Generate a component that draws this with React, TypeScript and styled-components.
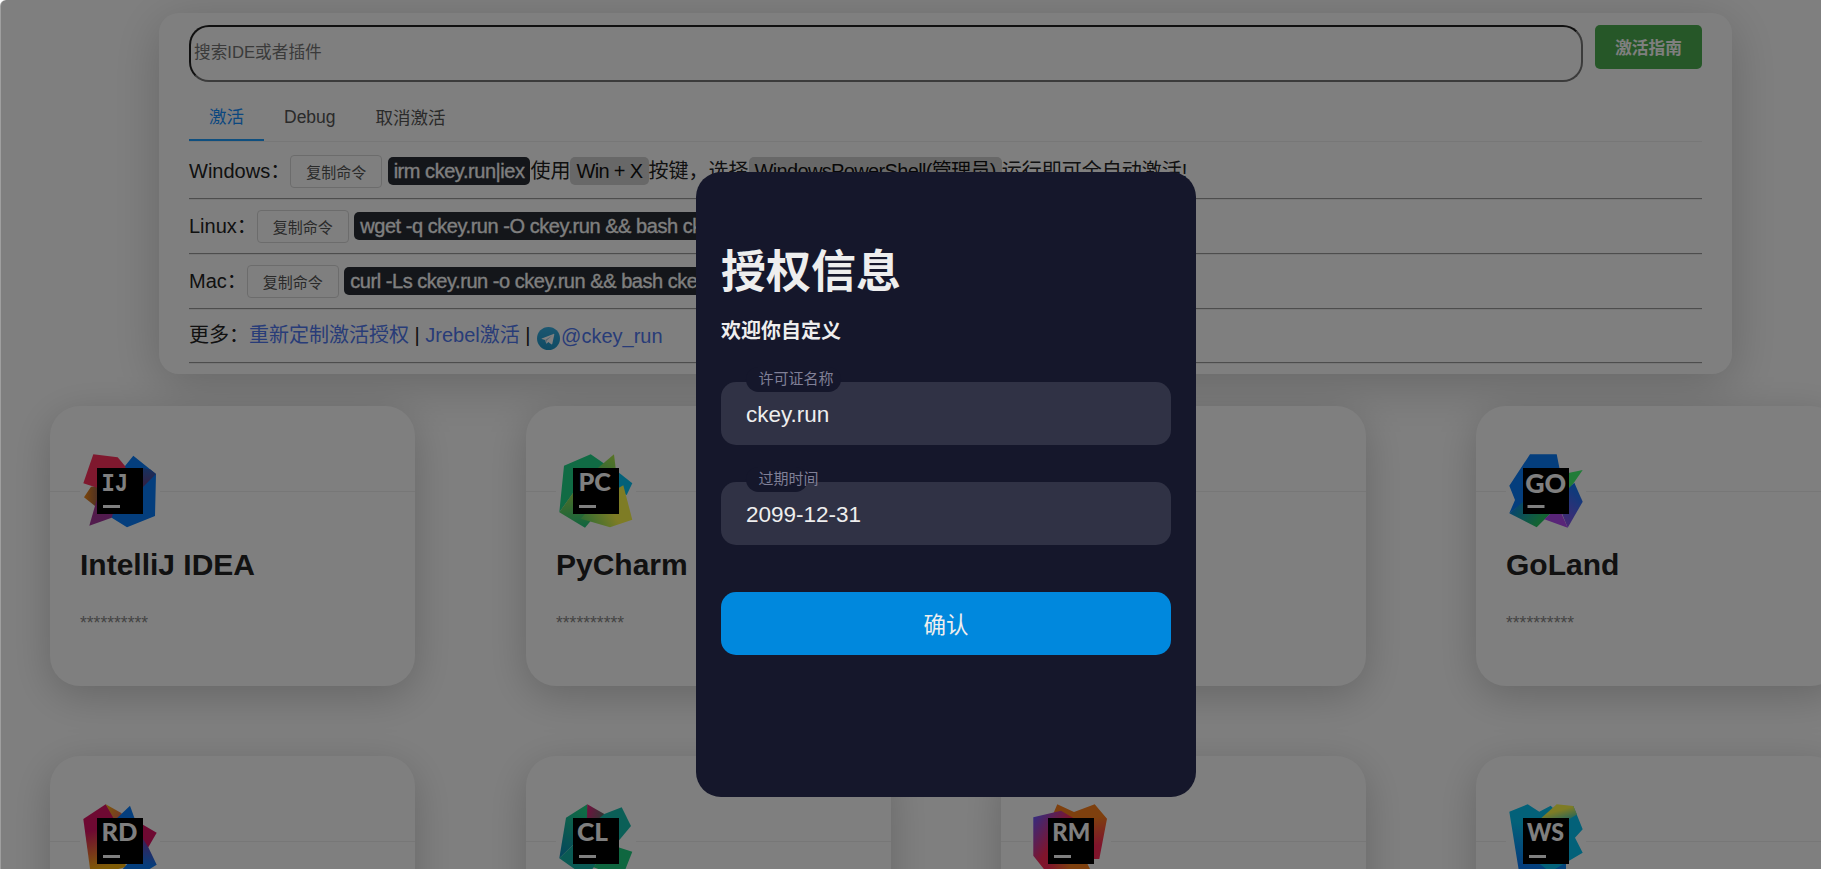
import React from 'react';
import styled, { createGlobalStyle } from 'styled-components';

const GlobalStyle = createGlobalStyle`
  * { box-sizing: border-box; }
  html, body { margin: 0; background: #fff; overflow: hidden; }
  body, input, button {
    font-family: "Liberation Sans", "Noto Sans CJK SC", sans-serif;
  }
`;

const Page = styled.div`
  position: relative;
  width: 1821px;
  height: 869px;
  overflow: hidden;
  padding: 13px 0 0;
  background: #fff;
  color: #222;
`;

const HeaderPanel = styled.header`
  width: 1573px;
  height: 361px;
  margin: 0 0 32px 159px;
  padding: 12px 30px 0;
  border-radius: 20px;
  background: #fff;
  box-shadow: 0 10px 50px rgba(0, 0, 0, 0.2);
`;

const SearchBar = styled.div`
  display: flex;
  align-items: flex-start;
  gap: 12px;
`;

const SearchInput = styled.input`
  flex: 1;
  height: 57px;
  padding: 0 2px 1px 3px;
  border: 2px inset #767676;
  border-radius: 20px;
  background: #fff;
  font-size: 16.67px;
  outline: none;
  &::placeholder { color: #757575; }
`;

const GuideButton = styled.button`
  width: 107px;
  height: 44px;
  padding: 0;
  border: 0;
  border-radius: 5px;
  background: #4caf50;
  color: #fff;
  font-size: 16.67px;
  font-weight: 700;
`;

const Tabs = styled.nav`
  display: flex;
  height: 60px;
  padding-top: 11px;
  border-bottom: 1px solid #eee;
`;

const Tab = styled.a<{ $active?: boolean; $line?: number }>`
  height: 48px;
  padding: 0 20px;
  line-height: ${(p) => p.$line ?? 49}px;
  font-size: 17.5px;
  color: ${(p) => (p.$active ? '#1890ff' : '#555')};
  border-bottom: 2px solid ${(p) => (p.$active ? '#1e9fff' : 'transparent')};
`;

const CommandRow = styled.div<{ $height: number; $top: number }>`
  display: flex;
  align-items: flex-start;
  height: ${(p) => p.$height}px;
  padding-top: ${(p) => p.$top}px;
  font-size: 20px;
  line-height: 28px;
  white-space: pre;
`;

const Rule = styled.hr`
  margin: 0;
  border: 0;
  border-top: 1px solid #9a9a9a;
  border-bottom: 1px solid #eee;
`;

const CopyButton = styled.button`
  width: 92px;
  height: 33px;
  margin: -2px 5.5px 0 0;
  padding: 0;
  border: 1px solid #d9d9d9;
  border-radius: 4px;
  background: #fff;
  color: #555;
  font-size: 15px;
`;

const Key = styled.code`
  height: 28px;
  padding: 0 6px;
  border-radius: 5px;
  font-family: inherit;
  letter-spacing: -0.65px;
  background: #d0d0d0;
  color: #111;
`;

const Code = styled(Key)`
  letter-spacing: -0.46px;
  background: #282c34;
  color: #fff;
  -webkit-text-stroke: 0.3px #fff;
`;

const Link = styled.a`
  color: #5078f0;
`;

const TelegramLink = styled(Link)`
  display: flex;
  padding: 1px 0 0 1px;
  svg { margin: 5px 1px 0 0; }
`;

const CardGrid = styled.main`
  display: grid;
  grid-template-columns: 366px 365px 365px 365px;
  grid-auto-rows: 280px;
  column-gap: 110px;
  row-gap: 70px;
  width: 1841px;
  padding-left: 50px;
`;

const Card = styled.article`
  width: 365px;
  padding: 45px 30px 0;
  border-radius: 30px;
  background: linear-gradient(#eee, #eee) 0 85px / 100% 1px no-repeat #fff;
  box-shadow: 0 10px 40px rgba(0, 0, 0, 0.2);
`;

const IconBox = styled.div`
  width: 80px;
  height: 80px;
  background: #fff;
  svg { display: block; }
`;

const CardTitle = styled.h2`
  margin: 17px 0 0;
  font-size: 30px;
  line-height: 34px;
  font-weight: 700;
`;

const CardKey = styled.p`
  margin: 31px 0 0;
  font-size: 17.5px;
  line-height: 20px;
  color: #888;
`;

const Overlay = styled.div`
  position: absolute;
  inset: 0;
  background: rgba(0, 0, 0, 0.5);
  border-left: 1px solid rgba(255, 255, 255, 0.25);
  border-top-left-radius: 6px;
`;

const Dialog = styled.form`
  position: absolute;
  left: 696px;
  top: 172px;
  width: 500px;
  height: 625px;
  padding: 65px 25px 0;
  border-radius: 25px;
  background: #15172b;
  color: #eee;
`;

const DialogTitle = styled.h1`
  margin: 0;
  height: 72px;
  font-size: 45px;
  line-height: 72px;
`;

const DialogSubtitle = styled.p`
  margin: 6px 0 0;
  height: 32px;
  font-size: 20px;
  line-height: 32px;
  font-weight: 700;
`;

const Field = styled.label<{ $gap: number }>`
  position: relative;
  display: block;
  height: 63px;
  margin-top: ${(p) => p.$gap}px;
`;

const FieldInput = styled.input`
  width: 100%;
  height: 100%;
  padding: 3px 25px 0;
  border: 0;
  border-radius: 15px;
  outline: 0;
  background: #303245;
  color: #eee;
  font-size: 22.5px;
`;

const Cut = styled.span<{ $width: number }>`
  position: absolute;
  left: 25px;
  top: -15px;
  width: ${(p) => p.$width}px;
  height: 25px;
  border-radius: 12.5px;
  background: #15172b;
`;

const FieldLabel = styled.span`
  position: absolute;
  left: 37.5px;
  top: -13px;
  font-size: 15px;
  line-height: 20px;
  white-space: nowrap;
  color: #808097;
`;

const Submit = styled.button`
  display: block;
  width: 100%;
  height: 63px;
  margin-top: 47px;
  padding: 0 0 2px;
  border: 0;
  border-radius: 15px;
  background: #08d;
  color: #eee;
  font-size: 22.5px;
`;

type Shape = { points: string; fill: string; to?: string; dir?: [number, number, number, number] };
type Product = {
  code: string;
  name: string;
  x: number;
  w: number;
  size?: number;
  font?: string;
  baseline?: number;
  barX?: number;
  shapes: Shape[];
};

const products: Product[] = [
  {
    code: 'IJ', name: 'IntelliJ IDEA', x: 21.5, w: 26.5, size: 26.5, font: 'Liberation Mono',
    shapes: [
      { points: '11,35.7 4,46.3 15,55 20,50 20,35', fill: '#f98a12', to: '#8a5a50', dir: [0, 0, 1, 0] },
      { points: '16.7,49 9.3,74.7 31.7,66.7 40,60', fill: '#a8328c', to: '#a03aa8', dir: [0, 0, 1, 1] },
      { points: '45,15 53.3,4.7 76,23 75,65 47,76.3 31.7,66.7 40,40', fill: '#087cfa' },
      { points: '76,23 63,36 63,17 70,18.3', fill: '#2b62c0', to: '#6b3f80', dir: [0, 0, 0, 1] },
      { points: '13.3,3.3 37.7,6.3 45,15 48,25 17,36.7 3.3,32.3', fill: '#fe315d' },
    ],
  },
  {
    code: 'PC', name: 'PyCharm', x: 22.5, w: 32.5,
    shapes: [
      { points: '34.7,3.3 47.7,12.3 60,30 17,42.3 3.3,61.3 8,14.7', fill: '#21d789' },
      { points: '3.3,61.3 17,42 40,60 34,70.7 29,76.7', fill: '#9bdc50', to: '#21c97f', dir: [0.4, 0, 0.5, 1] },
      { points: '58,3.3 60,20 36,22', fill: '#b8ea48', to: '#58d070', dir: [1, 0, 0, 1] },
      { points: '63,21.7 76.3,32.3 70.7,44 60,40', fill: '#07c3f2' },
      { points: '67.3,34.3 76.3,68.7 54,76.3 24.7,67.7 40,50', fill: '#48d46a', to: '#fcf84a', dir: [0, 1, 0.65, 0.7] },
    ],
  },
  {
    code: 'PS', name: 'PhpStorm', x: 22.5, w: 30,
    shapes: [
      { points: '8,12 38,3.3 72,16 76,52 50,76 12,68 3.3,40', fill: '#b74af7', to: '#6b57ff', dir: [0, 0, 1, 1] },
    ],
  },
  {
    code: 'GO', name: 'GoLand', x: 19.2, w: 41, size: 27, baseline: 41.7, barX: 21.5,
    shapes: [
      { points: '24,3.3 50.7,3.3 56,30 20,50 3.3,62.3 9,49 3.3,34.7', fill: '#087cfa' },
      { points: '3.3,62.3 17.3,50.7 44,63 30.7,76.3', fill: '#087cfa', to: '#27c765', dir: [0, 0, 0.9, 0.4] },
      { points: '60,22.5 76.7,19 60,43', fill: '#42f870' },
      { points: '68.3,31.7 76.7,50.7 61.7,76.7 55,60 60,40', fill: '#087cfa', to: '#9052e8', dir: [0.7, 0, 0.3, 1] },
      { points: '44,63 38.3,68.3 61.7,76.7 55.7,63', fill: '#b24af0' },
    ],
  },
  {
    code: 'RD', name: 'Rider', x: 21.5, w: 36,
    shapes: [
      { points: '25.7,3.3 3.3,18 11,75 46,66 36,18', fill: '#dd1265', to: '#fdb60d', dir: [0, 0.4, 0.1, 0.95] },
      { points: '25.7,3.3 41.7,12.3 40,20 35,20', fill: '#fdb60d', to: '#e8635a', dir: [0, 0, 1, 1] },
      { points: '50,4.7 55.5,20 34,20', fill: '#087cfa' },
      { points: '60,22 76.7,31.7 68.3,46.3 60,46', fill: '#dd1265' },
      { points: '60,33 68.3,46.3 76.7,63.7 55,77 40,71 50,60', fill: '#8a35a0', to: '#087cfa', dir: [0.6, 0, 0.5, 0.7] },
    ],
  },
  {
    code: 'CL', name: 'CLion', x: 21, w: 31,
    shapes: [
      { points: '31.3,3.3 10,16.7 3.3,57.3 20,41 34,20', fill: '#21d789', to: '#0a8eb8', dir: [0.6, 0, 0.2, 1] },
      { points: '31.3,3.3 48.3,13 44,20 31,20', fill: '#ed1e80', to: '#6c6868', dir: [0, 0, 1, 0.3] },
      { points: '65.7,6.3 75,25 60,43 40,20 48.3,13', fill: '#16bfae' },
      { points: '3.3,57.3 17,44 40,63 38,66 30,76', fill: '#14b5a8' },
      { points: '60,45.4 76.3,50.7 66,77 37,66 45,58', fill: '#1fce80' },
    ],
  },
  {
    code: 'RM', name: 'RubyMine', x: 21.3, w: 38,
    shapes: [
      { points: '26.3,3.3 43,11 63.7,3.3 76,17.7 68.3,58 60,58 20,18', fill: '#fc801d', to: '#fe2857', dir: [0.5, 0.3, 0.6, 0.8] },
      { points: '2.3,16.3 30,9.7 44,18 30,50 20,77 2.3,54.7', fill: '#6b57ff', to: '#fe2857', dir: [0.1, 0, 0.5, 0.45] },
      { points: '17,60 54,58 63,76 17,74', fill: '#fe2857', to: '#fc801d', dir: [0, 0, 0.5, 0] },
    ],
  },
  {
    code: 'WS', name: 'WebStorm', x: 21, w: 37,
    shapes: [
      { points: '3.3,10.7 21.7,3.3 33.3,10.7 44.7,4.7 60,20 60,77 14,77', fill: '#07c3f2', to: '#087cfa', dir: [0.2, 0.25, 0.1, 0.8] },
      { points: '50,8 67.3,5 76.7,28.3 69,36.7 76.7,51.7 44,71 30,60', fill: '#07c3f2' },
      { points: '50.7,3.3 67.3,5 71,13.5 60,20 32,20', fill: '#fcf84a', to: '#2fc4c8', dir: [0.5, 0.4, 0.9, 1] },
    ],
  },
];

const ProductIcon = ({ product }: { product: Product }) => (
  <svg width="80" height="80" viewBox="0 0 80 80">
    <defs>
      {product.shapes.map((s, i) =>
        s.to && s.dir ? (
          <linearGradient key={i} id={`${product.code}-${i}`} x1={s.dir[0]} y1={s.dir[1]} x2={s.dir[2]} y2={s.dir[3]}>
            <stop offset="0" stopColor={s.fill} />
            <stop offset="1" stopColor={s.to} />
          </linearGradient>
        ) : null,
      )}
    </defs>
    {product.shapes.map((s, i) => (
      <polygon key={i} points={s.points} fill={s.to ? `url(#${product.code}-${i})` : s.fill} />
    ))}
    <rect x="17" y="17" width="46" height="46" fill="#000" />
    <text
      x={product.x}
      y={product.baseline ?? 40}
      textLength={product.w}
      lengthAdjust="spacingAndGlyphs"
      fontFamily={product.font ?? 'Lato'}
      fontWeight="900"
      fontSize={product.size ?? 24}
      fill="#fff"
    >
      {product.code}
    </text>
    <rect x={product.barX ?? 23} y="54" width="17" height="3" fill="#fff" />
  </svg>
);

const Telegram = () => (
  <svg width="23" height="23" viewBox="0 0 24 24">
    <defs>
      <linearGradient id="tg" x1="0" y1="0" x2="0" y2="1">
        <stop offset="0" stopColor="#37aee2" />
        <stop offset="1" stopColor="#1e96c8" />
      </linearGradient>
    </defs>
    <circle cx="12" cy="12" r="12" fill="url(#tg)" />
    <path d="M5 12 17.2 7.2c.6-.2 1 .1.8.9l-2 9.4c-.2.7-.6.8-1.1.5l-3.1-2.3-1.6 1.500c-.3.2-.6.1-.7-.3l-1-3.300-3.400-1.100c-.6-.2-.6-.4-.1-.5z" fill="#fff" />
    <path d="m8.700 13.400 7-4.400-5.600 5.300-.3 2.700z" fill="#a9c9dd" />
  </svg>
);

export default function App() {
  return (
    <>
      <GlobalStyle />
      <Page>
        <HeaderPanel>
          <SearchBar>
            <SearchInput placeholder="搜索IDE或者插件" />
            <GuideButton>激活指南</GuideButton>
          </SearchBar>
          <Tabs>
            <Tab $active>激活</Tab>
            <Tab>Debug</Tab>
            <Tab $line={51}>取消激活</Tab>
          </Tabs>
          <CommandRow $height={56} $top={15}>
            Windows：<CopyButton>复制命令</CopyButton>
            <Code>irm ckey.run|iex</Code>使用<Key>Win + X</Key>按键，选择
            <Key>WindowsPowerShell(管理员)</Key>运行即可全自动激活!
          </CommandRow>
          <Rule />
          <CommandRow $height={53} $top={12}>
            Linux：<CopyButton>复制命令</CopyButton>
            <Code>wget -q ckey.run -O ckey.run &amp;&amp; bash ckey.run</Code>
          </CommandRow>
          <Rule />
          <CommandRow $height={53} $top={12}>
            Mac：<CopyButton>复制命令</CopyButton>
            <Code>curl -Ls ckey.run -o ckey.run &amp;&amp; bash ckey.run</Code>
          </CommandRow>
          <Rule />
          <CommandRow $height={52} $top={11}>
            更多：<Link>重新定制激活授权</Link>
            <span>{' | '}</span>
            <Link>Jrebel激活</Link>
            <span>{' | '}</span>
            <TelegramLink><Telegram />@ckey_run</TelegramLink>
          </CommandRow>
          <Rule />
        </HeaderPanel>
        <CardGrid>
          {products.map((p) => (
            <Card key={p.name}>
              <IconBox><ProductIcon product={p} /></IconBox>
              <CardTitle>{p.name}</CardTitle>
              <CardKey>**********</CardKey>
            </Card>
          ))}
        </CardGrid>
        <Overlay />
        <Dialog>
          <DialogTitle>授权信息</DialogTitle>
          <DialogSubtitle>欢迎你自定义</DialogSubtitle>
          <Field $gap={35}>
            <FieldInput defaultValue="ckey.run" />
            <Cut $width={95} />
            <FieldLabel>许可证名称</FieldLabel>
          </Field>
          <Field $gap={37}>
            <FieldInput defaultValue="2099-12-31" />
            <Cut $width={62} />
            <FieldLabel>过期时间</FieldLabel>
          </Field>
          <Submit type="button">确认</Submit>
        </Dialog>
      </Page>
    </>
  );
}
